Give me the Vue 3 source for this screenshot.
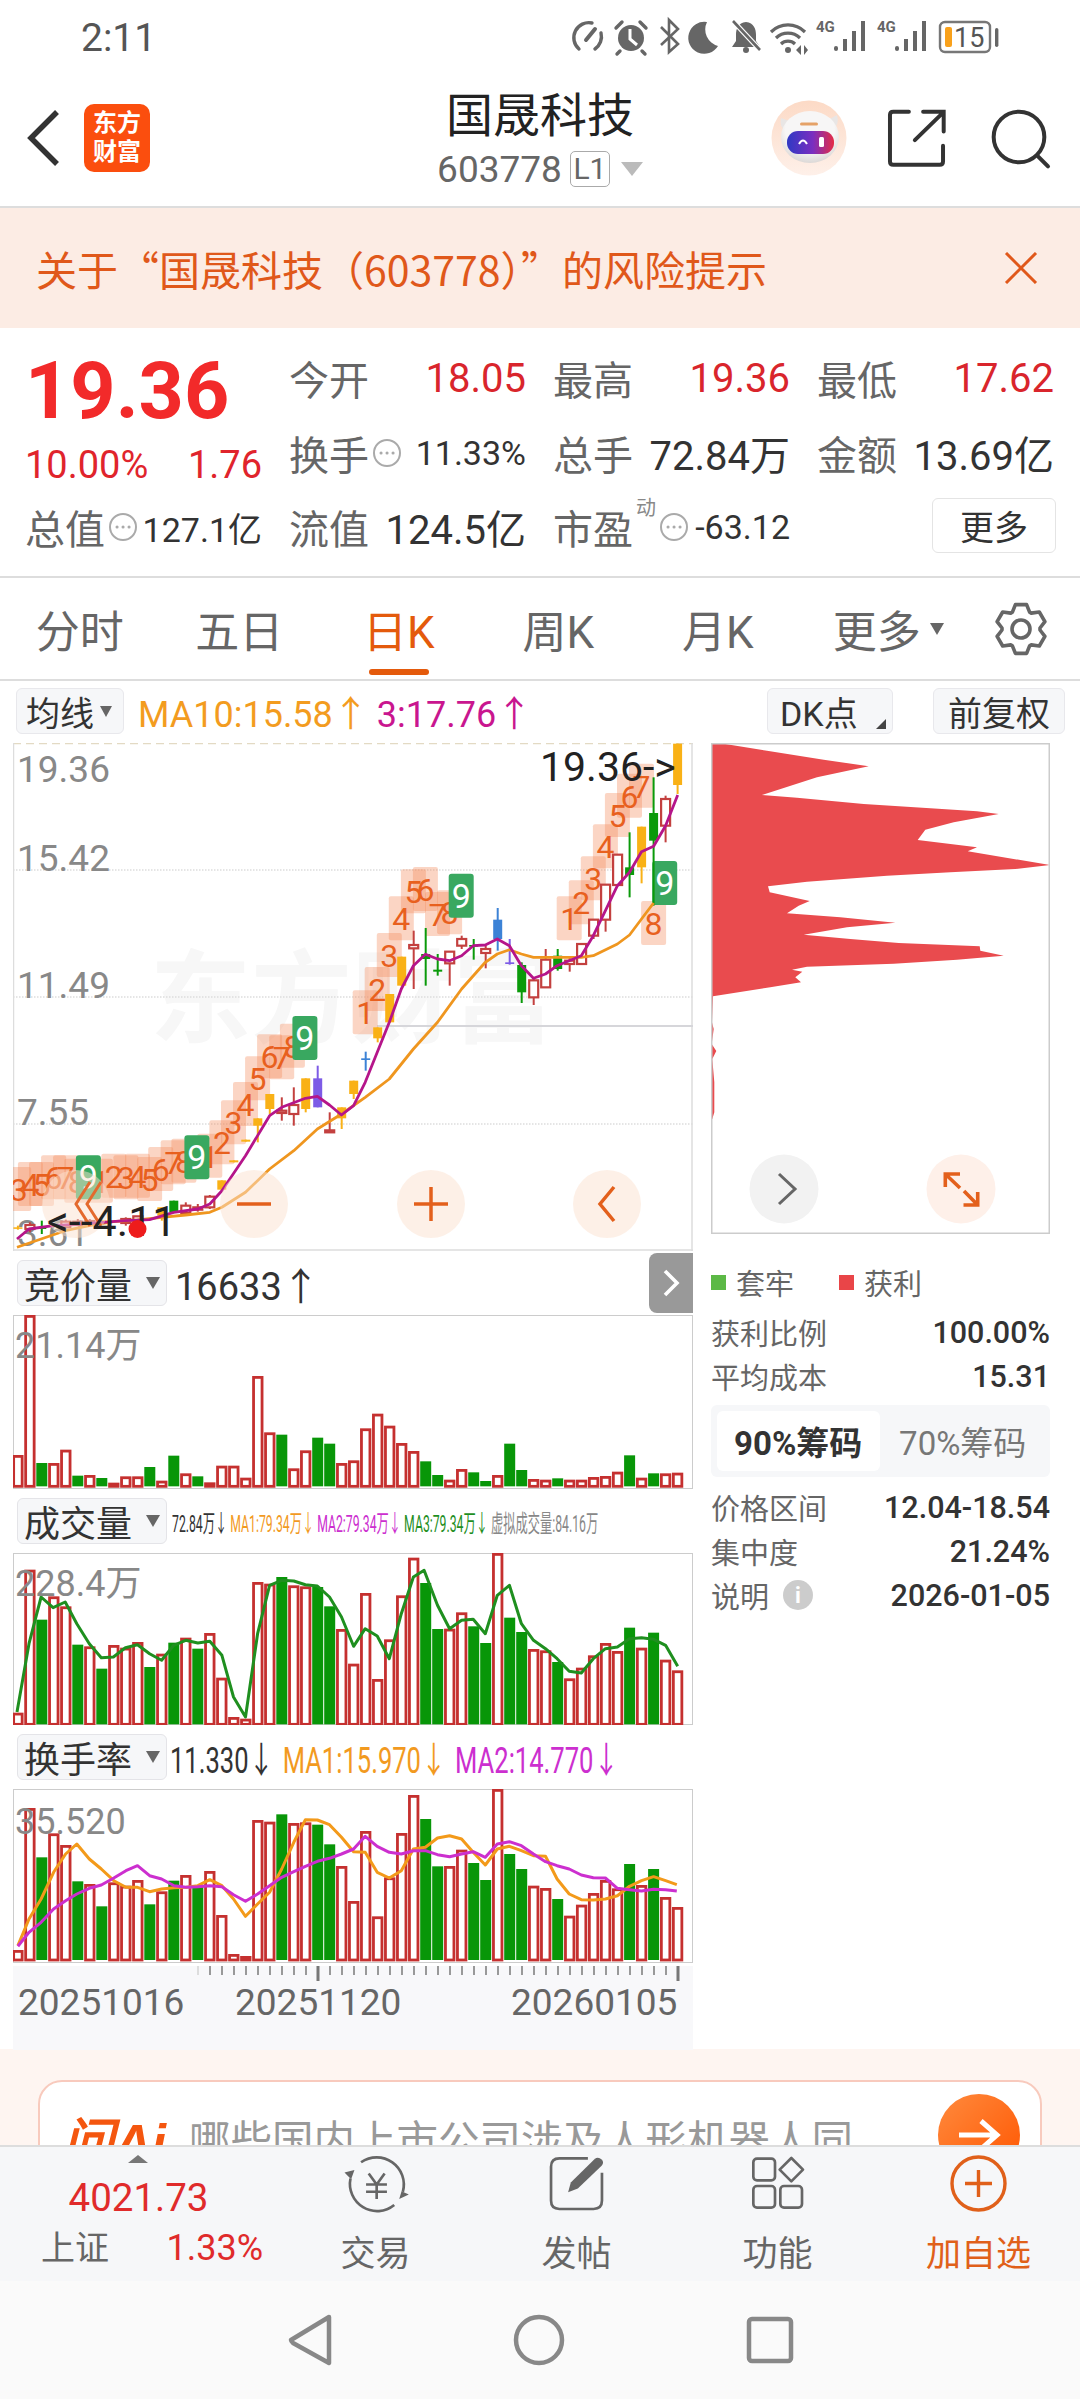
<template>
  <div class="phone" lang="zh-CN">
    <div class="status-bar">
      <span class="status-time">2:11</span>
      <svg class="status-icons" width="450" height="50" viewBox="0 0 450 50">
        <g fill="none" stroke="#666" stroke-width="3.4" stroke-linecap="round">
          <path d="M19 34 A15 15 0 0 1 32 8" />
          <path d="M41 18 A15 15 0 0 1 35 34" />
          <path d="M26 25 L35 14" stroke-width="4" />
        </g>
        <g fill="#666">
          <circle cx="71" cy="23" r="13" />
          <path d="M56 13 L62 7 M86 13 L80 7 M60 36 L57 39 M82 36 L85 39" stroke="#666" stroke-width="3.4" stroke-linecap="round" />
          <path d="M70 14 V24 L77 30" fill="none" stroke="#fff" stroke-width="3" />
        </g>
        <path d="M101 12 L118 29 L109 37 V5 L118 14 L101 30" fill="none" stroke="#666" stroke-width="2.6" />
        <path d="M147 7 A16 16 0 1 0 158 31 A17 17 0 0 1 147 7 Z" fill="#666" />
        <g fill="#666">
          <path d="M186 7 C178 8 176 14 176 20 V26 L172 32 H200 L196 26 V20 C196 14 194 8 186 7 Z" />
          <circle cx="186" cy="35" r="3" />
          <path d="M173 6 L200 35" stroke="#fff" stroke-width="5" />
          <path d="M173 6 L200 35" stroke="#666" stroke-width="2.6" />
        </g>
        <g fill="none" stroke="#666" stroke-width="3.2">
          <path d="M211 17 A24 24 0 0 1 245 17" />
          <path d="M216 23 A17 17 0 0 1 240 23" />
          <path d="M221 29 A10 10 0 0 1 235 29" />
        </g>
        <circle cx="228" cy="35" r="3" fill="#666" />
        <path d="M236 35 L241 30 V40 Z M244 30 L248 35 L244 40 Z" fill="#666" />
        <text x="256" y="17" class="st-4g">4G</text>
        <g fill="#666">
          <rect x="274" y="31" width="4" height="5" rx="2" />
          <rect x="283" y="24" width="4" height="12" />
          <rect x="292" y="16" width="4" height="20" />
          <rect x="301" y="6" width="4" height="30" />
        </g>
        <text x="317" y="17" class="st-4g">4G</text>
        <g fill="#666">
          <rect x="335" y="31" width="4" height="5" rx="2" />
          <rect x="344" y="24" width="4" height="12" />
          <rect x="353" y="16" width="4" height="20" />
          <rect x="362" y="6" width="4" height="30" />
        </g>
        <rect x="380" y="7" width="50" height="30" rx="5" fill="none" stroke="#777" stroke-width="2.4" />
        <rect x="385" y="12" width="7" height="20" rx="2" fill="#f9a11b" />
        <text x="394" y="31.5" class="st-batt">15</text>
        <rect x="435" y="13" width="3.4" height="19" rx="1.7" fill="#666" />
      </svg>
    </div>

    <header class="stock-head">
      <div class="head-left">
        <svg width="36" height="60" viewBox="0 0 36 60">
          <path d="M31 4 L5 30 L31 56" fill="none" stroke="#333" stroke-width="5.5" />
        </svg>
        <div class="logo"><span>东方</span><span>财富</span></div>
      </div>
      <div class="head-title">
        <div class="stock-name">国晟科技</div>
        <div class="stock-code">
          <span>603778</span>
          <span class="l1-tag">L1</span>
          <i class="caret caret-code"></i>
        </div>
      </div>
      <div class="head-right">
        <svg width="76" height="76" viewBox="0 0 76 76">
          <defs>
            <linearGradient id="avatarBg" x1="0" y1="0" x2="0" y2="1">
              <stop offset="0" stop-color="#fcdac6" />
              <stop offset="1" stop-color="#fef0e9" />
            </linearGradient>
            <linearGradient id="visor" x1="0" y1="0" x2="1" y2="0">
              <stop offset="0" stop-color="#2f39c4" />
              <stop offset="0.55" stop-color="#7a2fc0" />
              <stop offset="1" stop-color="#e42c46" />
            </linearGradient>
            <radialGradient id="helmet" cx="0.5" cy="0.35" r="0.7">
              <stop offset="0.6" stop-color="#f7f6f6" />
              <stop offset="1" stop-color="#d6d2d0" />
            </radialGradient>
          </defs>
          <circle cx="38" cy="38" r="37.5" fill="url(#avatarBg)" />
          <path d="M10 18 Q8 27 15 31 L21 22 Z M66 15 Q69 25 61 30 L55 21 Z" fill="#e9e6e5" />
          <ellipse cx="39" cy="37" rx="29" ry="26" fill="url(#helmet)" />
          <rect x="29" y="22.500" width="18" height="3" rx="1.5" fill="#e5a268" />
          <rect x="16" y="31" width="47" height="23" rx="11" fill="url(#visor)" />
          <path d="M28 44 Q32 37 36 44" fill="none" stroke="#fff" stroke-width="2" />
          <rect x="48" y="37" width="5" height="10" rx="1.5" fill="#fff" />
        </svg>
        <svg class="share-icon" width="63" height="63" viewBox="375 38 190 190">
          <path d="M447 52 H400 Q390 52 390 62 V202 Q390 212 400 212 H540 Q550 212 550 202 V155" fill="none" stroke="#333" stroke-width="12" stroke-linecap="round" />
          <path d="M465 138 L550 55 M490 52 H552 V112" fill="none" stroke="#333" stroke-width="12" stroke-linecap="round" />
        </svg>
        <svg class="search-icon" width="65" height="65" viewBox="685 32 195 195">
          <circle cx="778" cy="125" r="76" fill="none" stroke="#333" stroke-width="12" />
          <path d="M835 183 L865 213" stroke="#333" stroke-width="12" stroke-linecap="round" />
        </svg>
      </div>
    </header>

    <div class="risk-banner">
      <span>关于“国晟科技（603778）”的风险提示</span>
      <svg width="34" height="32" viewBox="0 0 34 32">
        <path d="M2 1 L32 31 M32 1 L2 31" stroke="#e0581a" stroke-width="3" />
      </svg>
    </div>

    <section class="quote">
      <div class="price-cell">
        <div class="price">19.36</div>
        <div class="price-change"><span>10.00%</span><span>1.76</span></div>
      </div>
      <div class="q-cell"><span class="q-label">今开</span><span class="q-val up">18.05</span></div>
      <div class="q-cell"><span class="q-label">最高</span><span class="q-val up">19.36</span></div>
      <div class="q-cell"><span class="q-label">最低</span><span class="q-val up">17.62</span></div>
      <div class="q-cell">
        <span class="q-label tip">换手<svg class="dots" width="30" height="30" viewBox="0 0 30 30"><circle cx="15" cy="15" r="13" /><path d="M9 15h.1M15 15h.1M21 15h.1" /></svg></span>
        <span class="q-val small">11.33%</span>
      </div>
      <div class="q-cell"><span class="q-label">总手</span><span class="q-val">72.84万</span></div>
      <div class="q-cell"><span class="q-label">金额</span><span class="q-val">13.69亿</span></div>
      <div class="q-cell">
        <span class="q-label tip">总值<svg class="dots" width="30" height="30" viewBox="0 0 30 30"><circle cx="15" cy="15" r="13" /><path d="M9 15h.1M15 15h.1M21 15h.1" /></svg></span>
        <span class="q-val small">127.1亿</span>
      </div>
      <div class="q-cell"><span class="q-label">流值</span><span class="q-val">124.5亿</span></div>
      <div class="q-cell">
        <span class="q-label tip">市盈<sup class="dyn">动</sup><svg class="dots" width="30" height="30" viewBox="0 0 30 30"><circle cx="15" cy="15" r="13" /><path d="M9 15h.1M15 15h.1M21 15h.1" /></svg></span>
        <span class="q-val small">-63.12</span>
      </div>
      <div class="q-cell q-more"><button class="more-btn">更多</button></div>
    </section>

    <nav class="period-tabs">
      <div v-for="tab in tabs" :key="tab" class="period-tab" :class="{ active: tab === '日K' }">
        <span>{{ tab }}</span>
      </div>
      <div class="period-tab more-tab"><span>更多</span><i class="caret caret-tab"></i></div>
      <svg class="gear" width="54" height="54" viewBox="0 0 54 54">
        <path :d="gearPath" fill="none" stroke="#666" stroke-width="3.6" stroke-linejoin="round" />
        <circle cx="27" cy="27" r="9" fill="none" stroke="#666" stroke-width="3.6" />
      </svg>
    </nav>

    <div class="chart-toolbar">
      <div class="tool-btn ma-btn">均线<i class="caret caret-mini"></i></div>
      <span class="ma-a">MA10:15.58↑</span>
      <span class="ma-b">3:17.76↑</span>
      <div class="tool-btn dk-btn">DK点<i class="corner"></i></div>
      <div class="tool-btn fq-btn">前复权</div>
    </div>

    <div class="chart-main">
      <div class="left-col">
        <svg class="kline" width="680" height="508" viewBox="0 0 680 508">
          <text class="watermark" x="137" y="292">东方财富</text>
          <path d="M0 0.5 H680" stroke="#e3dac4" stroke-width="1.5" stroke-dasharray="8 5" />
          <path d="M0.5 0 V508 M679 0 V508 M0 507 H680" stroke="#ddd" stroke-width="1.5" fill="none" />
          <path d="M0 127 H680 M0 254 H680 M0 381 H680" stroke="#ddd" stroke-width="1.5" stroke-dasharray="1.5 1.5" />
          <path d="M364 283 H680" stroke="#d6d6da" stroke-width="2" />

          <text class="y-label" x="4" y="39">19.36</text>
          <text class="y-label" x="4" y="128">15.42</text>
          <text class="y-label" x="4" y="255">11.49</text>
          <text class="y-label" x="4" y="382">7.55</text>
          <text class="y-label" x="4" y="503">3.61</text>

          <rect v-for="(c, n) in turnCells" :key="'c' + n" :x="c.x - 12.5" :y="c.y - 22" width="25" height="44" fill="#f58a5c" fill-opacity="0.36" rx="2" />
          <text v-for="(c, n) in turnCells" :key="'t' + n" class="turn-num" :x="c.x" :y="c.y + 12">{{ c.n }}</text>
          <g v-for="(b, n) in nineBadges" :key="'b' + n">
            <rect :x="b.x - 12.5" :y="b.y - 22" width="25" height="44" rx="3" fill="#39a860" />
            <text class="nine" :x="b.x" :y="b.y + 12">9</text>
          </g>

          <g v-for="(c, n) in candles" :key="'k' + n">
            <path :d="`M${c.x} ${c.wt} V${c.wb}`" :stroke="c.color" stroke-width="2" />
            <rect :x="c.x - 4.5" :y="c.bt" width="9" :height="c.bh" :fill="c.hollow ? '#fff' : c.color" :stroke="c.hollow ? c.color : 'none'" :stroke-width="c.hollow ? 2.2 : 0" />
          </g>
          <polyline :points="kOrange" fill="none" stroke="#ef961f" stroke-width="2.8" stroke-linejoin="round" />
          <polyline :points="kMagenta" fill="none" stroke="#b5158a" stroke-width="2.8" stroke-linejoin="round" />

          <text class="k-note big" x="527" y="38">19.36-&gt;</text>
          <circle cx="63" cy="461" r="34" fill="#fbe1d0" fill-opacity="0.5" />
          <path d="M77 439 L63 461 L77 483 M88 439 L74 461 L88 483" fill="none" stroke="#e46a2e" stroke-width="3" />
          <circle cx="241" cy="461" r="34" fill="#fbe1d0" fill-opacity="0.5" />
          <path d="M224 461 H258" stroke="#e3601c" stroke-width="3.5" />
          <circle cx="418" cy="461" r="34" fill="#fbe1d0" fill-opacity="0.5" />
          <path d="M401 461 H435 M418 444 V478" stroke="#e3601c" stroke-width="3.5" />
          <circle cx="594" cy="461" r="34" fill="#fbe1d0" fill-opacity="0.5" />
          <path d="M601 444 L587 461 L601 478" fill="none" stroke="#e3601c" stroke-width="3.5" />

          <text class="k-note low" x="34" y="493">&lt;--4.11</text>
          <circle cx="124.500" cy="486" r="9" fill="#ee1c1c" />
        </svg>

        <div class="ind-row">
          <div class="ind-tab">竞价量<i class="caret caret-ind"></i></div>
          <span class="ind-val">16633↑</span>
          <div class="collapse-tab">
            <svg width="18" height="28" viewBox="0 0 18 28"><path d="M3 2 L15 14 L3 26" fill="none" stroke="#fff" stroke-width="3.6" /></svg>
          </div>
        </div>
        <svg class="ind-chart" width="680" height="174" viewBox="0 0 680 174">
          <rect x="0.5" y="0.5" width="679" height="173" fill="none" stroke="#ccc" />
          <rect v-for="(b, n) in auctionBars" :key="n" v-bind="barAttrs(b)" />
          <text class="y-label small" x="2" y="43">21.14万</text>
        </svg>

        <div class="ind-row">
          <div class="ind-tab">成交量<i class="caret caret-ind"></i></div>
          <div class="vol-legend">
            <span class="dark">72.84万↓</span>
            <span class="orange">MA1:79.34万↓</span>
            <span class="purple">MA2:79.34万↓</span>
            <span class="green">MA3:79.34万↓</span>
            <span class="grey">虚拟成交量:84.16万</span>
          </div>
        </div>
        <svg class="ind-chart" width="680" height="172" viewBox="0 0 680 172">
          <rect x="0.5" y="0.5" width="679" height="171" fill="none" stroke="#ccc" />
          <rect v-for="(b, n) in volumeBars" :key="n" v-bind="barAttrs(b)" />
          <polyline :points="volLine" fill="none" stroke="#1f8f1f" stroke-width="3" stroke-linejoin="round" />
          <text class="y-label small" x="2" y="43">228.4万</text>
        </svg>

        <div class="ind-row">
          <div class="ind-tab">换手率<i class="caret caret-ind"></i></div>
          <div class="turn-legend">
            <span class="dark">11.330↓</span>
            <span class="orange">MA1:15.970↓</span>
            <span class="purple">MA2:14.770↓</span>
          </div>
        </div>
        <svg class="ind-chart" width="680" height="174" viewBox="0 0 680 174">
          <rect x="0.5" y="0.5" width="679" height="173" fill="none" stroke="#ccc" />
          <rect v-for="(b, n) in turnoverBars" :key="n" v-bind="barAttrs(b)" />
          <polyline :points="turnOrange" fill="none" stroke="#f39a1a" stroke-width="3" stroke-linejoin="round" />
          <polyline :points="turnMagenta" fill="none" stroke="#cc2fcf" stroke-width="3" stroke-linejoin="round" />
          <text class="y-label small" x="2" y="45">35.520</text>
        </svg>

        <svg class="xaxis" width="680" height="84" viewBox="0 0 680 84">
          <path v-for="t in xTicks" :key="t.x" :d="`M${t.x} 0 V${t.h}`" :stroke="t.color" :stroke-width="t.w" />
          <text class="x-label" x="5" y="49">20251016</text>
          <text class="x-label" x="222" y="49">20251120</text>
          <text class="x-label" x="498" y="49">20260105</text>
        </svg>
      </div>

      <div class="right-col">
        <svg class="chips" width="339" height="491" viewBox="0 0 339 491">
          <polygon :points="chipPoints" fill="#e94b4e" />
          <rect x="0.75" y="0.75" width="337.5" height="489.5" fill="none" stroke="#ccc" stroke-width="1.5" />
          <circle cx="73" cy="446" r="34.500" fill="#f2f2f2" />
          <path d="M68 431 L84 446 L68 461" fill="none" stroke="#666" stroke-width="3" />
          <circle cx="250" cy="446" r="34.500" fill="#fef0e9" />
          <path d="M234.300 444 V431 H249 M234.300 431 L249 445 M266.700 449 V462 H252.500 M266.700 462 L253 448" fill="none" stroke="#e3601c" stroke-width="3.6" />
        </svg>
        <div class="chip-legend">
          <i class="sq sq-green"></i><span>套牢</span>
          <i class="sq sq-red"></i><span>获利</span>
        </div>
        <div class="chip-row first"><span>获利比例</span><b>100.00%</b></div>
        <div class="chip-row"><span>平均成本</span><b>15.31</b></div>
        <div class="chip-seg">
          <div class="seg-item active">90%筹码</div>
          <div class="seg-item">70%筹码</div>
        </div>
        <div class="chip-row after-seg"><span>价格区间</span><b>12.04-18.54</b></div>
        <div class="chip-row"><span>集中度</span><b>21.24%</b></div>
        <div class="chip-row"><span class="with-info">说明<i class="info">i</i></span><b>2026-01-05</b></div>
      </div>
    </div>

    <div class="ai-strip">
      <div class="ai-card">
        <span class="ai-logo">问Ai</span>
        <span class="ai-text">哪些国内上市公司涉及人形机器人同</span>
        <div class="ai-go">
          <svg width="44" height="36" viewBox="0 0 44 36"><path d="M2 18 H38 M24 4 L40 18 L24 32" fill="none" stroke="#fff" stroke-width="5" /></svg>
        </div>
      </div>
    </div>

    <footer class="bottom-bar">
      <div class="index-cell">
        <i class="caret-up"></i>
        <div class="index-value">4021.73</div>
        <div class="index-row"><span>上证</span><span class="up">1.33%</span></div>
      </div>
      <div class="bar-cell">
        <svg width="70" height="63" viewBox="0 10 210 190">
          <g fill="none" stroke="#666" stroke-width="8">
            <path d="M60 41 A82 82 0 0 1 186 130" />
            <path d="M160 170 A82 82 0 0 1 28 90" />
            <path d="M83 75 L107 108 L131 75 M75 108 H138 M75 130 H138 M107 108 V152" />
          </g>
          <path d="M175 152 L204 138 L182 128 Z M10 72 L40 64 L30 92 Z" fill="#666" />
        </svg>
        <span>交易</span>
      </div>
      <div class="bar-cell">
        <svg width="62" height="63" viewBox="620 13 185 188">
          <path d="M745 32 H660 Q635 32 635 57 V158 Q635 183 660 183 H762 Q787 183 787 158 V75" fill="none" stroke="#666" stroke-width="8" />
          <path d="M686 133 L694 104 L766 33 Q776 26 787 36 Q794 45 786 54 L715 122 Z" fill="#666" />
        </svg>
        <span>发帖</span>
      </div>
      <div class="bar-cell">
        <svg width="60" height="63" viewBox="1225 15 180 189">
          <g fill="none" stroke="#666" stroke-width="8">
            <rect x="1241" y="35" width="65" height="65" rx="11" />
            <rect x="1241" y="117" width="65" height="65" rx="11" />
            <rect x="1322" y="117" width="65" height="65" rx="11" />
            <path d="M1355 33 L1390 68 L1355 103 L1320 68 Z" stroke-linejoin="round" />
          </g>
        </svg>
        <span>功能</span>
      </div>
      <div class="bar-cell accent">
        <svg width="63" height="63" viewBox="0 0 63 63">
          <circle cx="31.500" cy="31.500" r="26.500" fill="none" stroke="#e0601a" stroke-width="3.4" />
          <path d="M18 31.500 H45 M31.500 18 V45" stroke="#e0601a" stroke-width="3.4" />
        </svg>
        <span>加自选</span>
      </div>
    </footer>

    <div class="nav-bar">
      <svg width="44" height="52" viewBox="0 0 44 52"><path d="M41 3 L3 26 Q3 27 5 29 L41 49 Z" fill="none" stroke="#888" stroke-width="4.500" stroke-linejoin="round" /></svg>
      <svg width="52" height="52" viewBox="0 0 52 52"><circle cx="26" cy="26" r="23" fill="none" stroke="#888" stroke-width="4.500" /></svg>
      <svg width="48" height="48" viewBox="0 0 48 48"><rect x="3" y="3" width="42" height="42" rx="3" fill="none" stroke="#888" stroke-width="4.500" /></svg>
    </div>
  </div>
</template>

<script setup>
const tabs = ['分时', '五日', '日K', '周K', '月K']

// chart values were read off the 700px wide crops, so convert those units to svg px
const px = (zx) => +(zx / 2.24 - 13).toFixed(1)
const xOf = (i) => px(40 + 26.87 * i)
const toPoints = (pts, top) =>
  pts.map(([x, y]) => `${px(x)},${((y - top) / 3).toFixed(1)}`).join(' ')

const greenDays = [2, 5, 7, 11, 13, 15, 22, 25, 26, 34, 35, 38, 39, 41, 42, 45, 51, 53]

const buildBars = (tops, ztop, zbase) =>
  tops.map((t, i) => ({
    x: xOf(i),
    y: (t - ztop) / 3,
    h: (zbase - t) / 3,
    down: greenDays.includes(i)
  }))

const barAttrs = (b) =>
  b.down
    ? { x: b.x - 5.5, y: b.y, width: 11, height: b.h, fill: '#089608' }
    : { x: b.x - 4.25, y: b.y + 1.4, width: 8.5, height: b.h - 1.4, fill: '#fff', stroke: '#c5302f', 'stroke-width': 2.8 }

const auctionBars = buildBars([
  648, 228, 672, 672, 632, 710, 708, 717, 731, 712, 712, 684, 725, 650, 703, 712, 730, 680, 680, 716,
  411, 580, 587, 688, 634, 596, 614, 672, 664, 568, 524, 560, 612, 636, 667, 708, 722, 690, 700, 726,
  708, 614, 693, 720, 722, 718, 722, 722, 714, 711, 698, 649, 716, 703, 703, 701
], 228, 742)

const volumeBars = buildBars([
  1417, 988, 1138, 1068, 1098, 1213, 1218, 1285, 1214, 1222, 1205, 1280, 1240, 1207, 1192, 1225, 1178, 1312, 1430, 1435,
  1025, 1030, 1010, 1035, 1038, 1040, 1098, 1166, 1270, 1058, 1316, 1197, 1065, 952, 1028, 1166, 1165, 1116, 1158, 1208,
  938, 1132, 1175, 1226, 1230, 1265, 1314, 1282, 1245, 1208, 1232, 1162, 1222, 1177, 1258, 1290
], 938, 1452)

const turnoverBars = buildBars([
  663, 237, 385, 313, 348, 457, 465, 532, 460, 470, 453, 526, 487, 455, 438, 470, 426, 558, 675, 681,
  273, 278, 256, 282, 280, 287, 346, 411, 516, 306, 562, 445, 312, 198, 270, 412, 411, 362, 402, 453,
  180, 375, 420, 470, 477, 510, 560, 527, 492, 453, 478, 405, 468, 420, 504, 534
], 180, 693)

const volLine = toPoints([
  [38, 1415], [65, 1210], [92, 1070], [119, 1102], [146, 1085], [172, 1150], [200, 1210], [227, 1252], [254, 1250], [281, 1222],
  [308, 1213], [335, 1240], [362, 1260], [389, 1215], [416, 1200], [443, 1208], [470, 1203], [497, 1245], [523, 1370], [550, 1430],
  [577, 1180], [604, 1035], [631, 1020], [658, 1022], [684, 1033], [711, 1037], [738, 1070], [765, 1130], [792, 1218], [818, 1165],
  [845, 1187], [872, 1255], [899, 1120], [926, 1010], [950, 990], [980, 1095], [1007, 1165], [1034, 1140], [1060, 1137], [1087, 1180],
  [1114, 1065], [1141, 1035], [1168, 1150], [1195, 1200], [1222, 1225], [1248, 1255], [1275, 1293], [1302, 1298], [1329, 1255], [1356, 1225],
  [1383, 1220], [1410, 1195], [1437, 1192], [1464, 1197], [1491, 1215], [1518, 1278]
], 938)

const turnOrange = toPoints([
  [40, 650], [65, 570], [92, 510], [120, 430], [147, 375], [172, 345], [200, 390], [227, 420], [255, 455], [282, 475],
  [308, 475], [335, 488], [362, 480], [390, 476], [417, 475], [443, 470], [470, 452], [497, 470], [523, 510], [550, 562],
  [577, 525], [604, 490], [631, 420], [658, 340], [684, 272], [711, 273], [738, 287], [765, 325], [792, 368], [818, 370],
  [845, 430], [872, 447], [899, 425], [926, 360], [953, 355], [980, 327], [1007, 320], [1034, 330], [1060, 370], [1087, 408],
  [1114, 360], [1141, 352], [1168, 365], [1195, 380], [1222, 382], [1248, 450], [1275, 495], [1302, 512], [1329, 513], [1356, 510],
  [1383, 500], [1410, 472], [1437, 455], [1464, 443], [1491, 455], [1516, 467]
], 180)

const turnMagenta = toPoints([
  [40, 652], [65, 610], [92, 580], [120, 540], [147, 515], [172, 495], [200, 478], [227, 468], [255, 447], [282, 425],
  [308, 410], [335, 440], [362, 450], [390, 470], [417, 475], [443, 473], [470, 470], [497, 473], [523, 497], [550, 517],
  [577, 495], [604, 470], [631, 445], [658, 428], [684, 412], [711, 397], [738, 388], [765, 375], [792, 360], [818, 322],
  [845, 352], [872, 370], [899, 375], [926, 365], [953, 365], [980, 377], [1007, 383], [1034, 375], [1060, 368], [1087, 385],
  [1114, 345], [1141, 338], [1168, 350], [1195, 375], [1222, 398], [1248, 410], [1275, 420], [1302, 438], [1329, 446], [1356, 447],
  [1383, 478], [1410, 482], [1437, 486], [1464, 481], [1491, 482], [1516, 486]
], 180)

const kOrange = toPoints([
  [38, 1555], [92, 1530], [146, 1505], [200, 1490], [254, 1478], [308, 1473], [362, 1465], [416, 1458], [470, 1450], [497, 1435],
  [550, 1390], [604, 1320], [658, 1265], [711, 1200], [765, 1155], [818, 1105], [872, 1050], [926, 960], [980, 880], [1034, 780],
  [1087, 700], [1114, 675], [1141, 662], [1168, 675], [1195, 685], [1248, 685], [1302, 685], [1329, 680], [1383, 645], [1410, 618],
  [1437, 570], [1464, 522]
], 42)

const kMagenta = toPoints([
  [38, 1530], [65, 1500], [119, 1490], [200, 1483], [281, 1475], [335, 1472], [389, 1450], [443, 1440], [470, 1425], [497, 1385],
  [550, 1280], [604, 1160], [631, 1135], [684, 1108], [711, 1102], [738, 1128], [765, 1158], [792, 1130], [818, 1060], [872, 880],
  [899, 780], [926, 710], [953, 676], [980, 690], [1007, 695], [1034, 680], [1060, 650], [1087, 648], [1114, 630], [1141, 650],
  [1168, 710], [1195, 748], [1222, 735], [1248, 710], [1275, 695], [1302, 680], [1329, 620], [1356, 545], [1383, 470], [1410, 430],
  [1437, 368], [1464, 352], [1491, 290], [1518, 198]
], 42)

const candleColors = { r: '#c3403f', o: '#f9b116', g: '#0a9a0a', b: '#3c82d6', p: '#7d5be6' }

// [day, wick top, wick bottom, body top, body bottom, kind]
const candles = [
  [0, 1490, 1502, 1495, 1499, 'o'], [1, 1480, 1510, 1488, 1500, 'r'], [2, 1475, 1515, 1495, 1500, 'g'],
  [4, 1472, 1498, 1478, 1495, 'r'], [5, 1470, 1490, 1478, 1488, 'r'], [6, 1470, 1490, 1476, 1486, 'r'],
  [7, 1472, 1488, 1474, 1480, 'o'], [9, 1465, 1490, 1470, 1482, 'r'], [10, 1462, 1500, 1462, 1482, 'r'],
  [12, 1435, 1475, 1435, 1460, 'o'], [13, 1415, 1452, 1415, 1450, 'g'], [14, 1420, 1460, 1430, 1452, 'r'],
  [15, 1425, 1448, 1435, 1442, 'r'], [16, 1398, 1440, 1403, 1435, 'r'], [17, 1354, 1385, 1354, 1382, 'o'],
  [18, 1294, 1300, 1294, 1300, 'o'], [19, 1232, 1238, 1232, 1238, 'o'], [20, 1168, 1240, 1168, 1190, 'o'],
  [21, 1095, 1155, 1095, 1140, 'o'], [22, 1105, 1175, 1145, 1152, 'r'], [23, 1075, 1190, 1128, 1155, 'r'],
  [24, 1048, 1150, 1048, 1140, 'o'], [25, 1010, 1135, 1048, 1135, 'p'], [26, 1150, 1212, 1204, 1210, 'r'],
  [27, 1135, 1200, 1135, 1168, 'o'], [28, 1055, 1110, 1055, 1095, 'o'], [29, 968, 1025, 988, 993, 'b'],
  [30, 895, 940, 895, 928, 'o'], [31, 795, 882, 795, 880, 'o'], [32, 683, 772, 683, 770, 'o'],
  [33, 605, 780, 648, 658, 'r'], [34, 597, 770, 675, 690, 'g'], [35, 675, 740, 722, 728, 'g'],
  [36, 668, 770, 668, 703, 'r'], [37, 620, 660, 630, 650, 'r'], [38, 630, 692, 648, 653, 'g'],
  [39, 650, 718, 660, 672, 'r'], [40, 537, 665, 572, 630, 'b'], [41, 630, 707, 700, 705, 'p'],
  [42, 700, 822, 708, 790, 'g'], [43, 745, 828, 754, 805, 'r'], [44, 660, 775, 692, 775, 'r'],
  [45, 660, 725, 680, 720, 'g'], [46, 685, 728, 695, 705, 'r'], [47, 645, 705, 645, 705, 'r'],
  [48, 570, 630, 572, 620, 'r'], [49, 467, 608, 467, 572, 'r'], [50, 377, 470, 377, 468, 'r'],
  [51, 310, 505, 415, 438, 'g'], [52, 293, 463, 293, 415, 'o'], [53, 145, 530, 252, 335, 'g'],
  [54, 200, 340, 210, 290, 'r'], [55, 44, 195, 44, 168, 'o']
].map(([i, wt, wb, bt, bb, kind]) => ({
  x: xOf(i),
  wt: (wt - 42) / 3,
  wb: (wb - 42) / 3,
  bt: (bt - 42) / 3,
  bh: Math.max((bb - bt) / 3, 1.5),
  color: candleColors[kind],
  hollow: kind === 'r'
}))

const turnCells = [
  ['3', 42, 1380], ['4', 68, 1365], ['5', 93, 1365], ['6', 120, 1345], ['7', 147, 1345], ['8', 172, 1355],
  ['1', 225, 1355], ['2', 255, 1340], ['3', 282, 1345], ['4', 308, 1340], ['5', 335, 1350], ['6', 360, 1320],
  ['7', 388, 1300], ['8', 412, 1295], ['1', 470, 1280], ['2', 497, 1240], ['3', 523, 1180], ['4', 550, 1125],
  ['5', 577, 1048], ['6', 604, 982], ['7', 631, 985], ['8', 655, 950],
  ['1', 818, 850], ['2', 845, 780], ['3', 872, 678], ['4', 899, 568], ['5', 926, 487], ['6', 953, 480],
  ['7', 980, 555], ['8', 1007, 550],
  ['1', 1275, 568], ['2', 1302, 520], ['3', 1329, 448], ['4', 1356, 352], ['5', 1383, 258], ['6', 1410, 200],
  ['7', 1437, 170], ['8', 1464, 582]
].map(([n, x, y]) => ({ n, x: px(x), y: (y - 42) / 3 }))

const nineBadges = [[198, 1345], [441, 1285], [683, 927], [1033, 500], [1489, 462]].map(([x, y]) => ({
  x: px(x),
  y: (y - 42) / 3
}))

// chip distribution outline, from the 3x crop of the right panel
const chipPoints = [
  [62, 42], [100, 44], [230, 65], [400, 92], [535, 112], [380, 145], [215, 198], [320, 206], [520, 225], [720, 238],
  [860, 247], [925, 255], [790, 280], [705, 302], [682, 333], [860, 355], [832, 367], [1080, 408], [975, 420], [780, 430],
  [590, 440], [350, 458], [233, 472], [238, 490], [358, 516], [325, 530], [290, 553], [450, 565], [615, 581], [470, 595],
  [340, 617], [480, 630], [625, 642], [868, 652], [870, 665], [940, 680], [800, 692], [610, 704], [350, 713], [305, 722],
  [336, 728], [315, 745], [332, 760], [240, 775], [68, 802], [65, 880], [70, 900], [64, 945], [78, 966], [66, 990],
  [72, 1060], [72, 1150], [66, 1170], [62, 1170]
].map(([x, y]) => `${((x - 62) / 3).toFixed(1)},${((y - 42) / 3).toFixed(1)}`).join(' ')

const xTicks = []
for (let i = 0; i <= 40; i++) {
  const x = +(665 - 12 * i).toFixed(1)
  const major = i === 0 || i === 30
  xTicks.push({
    x,
    h: major ? 15 : 9,
    w: major ? 3 : 2,
    color: x < 190 ? '#ddd' : major ? '#777' : '#999'
  })
}

const gearPoints = []
for (let k = 0; k < 6; k++) {
  const a = -90 + 60 * k
  ;[[-27, 19], [-13, 25], [13, 25], [27, 19]].forEach(([d, r]) => {
    const rad = ((a + d) * Math.PI) / 180
    gearPoints.push(`${(27 + r * Math.cos(rad)).toFixed(1)} ${(27 + r * Math.sin(rad)).toFixed(1)}`)
  })
}
const gearPath = 'M' + gearPoints.join(' L') + ' Z'
</script>

<style scoped>
.phone {
  position: relative;
  width: 1080px;
  height: 2400px;
  overflow: hidden;
  background: #fff;
  font-family: Roboto, "Noto Sans CJK SC", sans-serif;
  color: #333;
}

.status-bar {
  display: flex;
  justify-content: space-between;
  height: 72px;
  padding-left: 81px;
  padding-right: 70px;
  box-sizing: border-box;
}

.status-time {
  font-size: 39px;
  line-height: 76px;
  color: #555;
}

.status-icons {
  margin-top: 15px;
}

.st-4g {
  font-family: Roboto, sans-serif;
  font-size: 15px;
  font-weight: 700;
  fill: #666;
}

.st-batt {
  font-family: Roboto, sans-serif;
  font-size: 27px;
  fill: #555;
}

.stock-head {
  display: grid;
  grid-template-columns: 1fr auto 1fr;
  height: 134px;
  border-bottom: 2px solid #ddd;
  box-sizing: content-box;
}

.head-left {
  display: flex;
  align-items: center;
  gap: 22px;
  padding-left: 26px;
  margin-top: -2px;
}

.logo {
  display: flex;
  flex-direction: column;
  align-items: center;
  justify-content: center;
  width: 66px;
  height: 68px;
  border-radius: 10px;
  background: #fb4e0e;
  color: #fff;
  font-size: 24px;
  font-weight: 700;
  line-height: 29px;
}

.head-title {
  display: flex;
  flex-direction: column;
  align-items: center;
}

.stock-name {
  margin-top: 18px;
  font-size: 47px;
  line-height: 52px;
  color: #222;
}

.stock-code {
  display: flex;
  align-items: center;
  height: 44px;
  margin-top: 5px;
  font-size: 37px;
  color: #666;
}

.l1-tag {
  width: 40px;
  height: 36px;
  margin-left: 8px;
  border: 1.5px solid #aaa;
  border-radius: 5px;
  box-sizing: border-box;
  font-size: 30px;
  line-height: 33px;
  text-align: center;
}

.caret {
  display: inline-block;
  width: 0;
  height: 0;
  border-style: solid;
  border-color: #666 transparent transparent;
}

.caret-code {
  margin-left: 11px;
  border-width: 14px 11px 0;
  border-top-color: #bbb;
}

.head-right {
  display: flex;
  align-items: center;
  justify-content: flex-end;
  padding-right: 27px;
  margin-top: -2px;
}

.share-icon {
  margin-left: 38px;
}

.search-icon {
  margin-left: 40px;
}

.risk-banner {
  display: flex;
  align-items: center;
  justify-content: space-between;
  height: 120px;
  padding: 0 42px 0 36px;
  background: #fcece4;
  color: #e0581a;
  font-family: "Noto Sans CJK SC", Roboto, sans-serif;
  font-size: 41px;
}

.quote {
  display: grid;
  grid-template-columns: repeat(4, 237px);
  grid-auto-rows: 74.5px;
  column-gap: 27px;
  height: 250px;
  padding: 13px 0 0 25px;
  box-sizing: border-box;
  border-bottom: 2px solid #ddd;
}

.price-cell {
  grid-column: 1;
  grid-row: 1 / span 2;
}

.price {
  margin-top: 6px;
  font-size: 79px;
  font-weight: 700;
  line-height: 88px;
  color: #f22a2a;
}

.price-change {
  display: flex;
  justify-content: space-between;
  font-size: 38px;
  line-height: 48px;
  color: #e0242c;
  margin-top: 6px;
}

.q-cell {
  display: flex;
  align-items: center;
  justify-content: space-between;
  white-space: nowrap;
}

.q-label {
  display: flex;
  align-items: center;
  font-size: 40px;
  color: #666;
}

.q-val {
  font-size: 40px;
  color: #333;
}

.q-val.up,
.up {
  color: #d9252c;
}

.q-val.small {
  font-size: 34px;
}

.dots {
  flex-shrink: 0;
  margin-left: 3px;
  fill: none;
  stroke: #aaa;
  stroke-width: 2;
}

.dots path {
  stroke-linecap: round;
  stroke-width: 3;
}

.dyn {
  align-self: flex-start;
  margin: -2px 0 0 3px;
  font-size: 20px;
  line-height: 24px;
  color: #888;
}

.q-more {
  justify-content: flex-end;
  padding-bottom: 4px;
}

.more-btn {
  width: 124px;
  height: 55px;
  margin-right: -2px;
  border: 1px solid #e4e4e4;
  border-radius: 6px;
  background: #fff;
  font-family: inherit;
  font-size: 34px;
  color: #333;
}

.period-tabs {
  display: flex;
  align-items: center;
  height: 101px;
  border-bottom: 2px solid #ddd;
  font-size: 44px;
  color: #666;
}

.period-tab {
  position: relative;
  width: 159.5px;
  text-align: center;
}

.period-tab.active {
  color: #e45a0c;
}

.period-tab.active span::after {
  content: "";
  position: absolute;
  left: 50px;
  bottom: -14px;
  width: 60px;
  height: 6px;
  border-radius: 3px;
  background: #e45a0c;
}

.more-tab {
  display: flex;
  align-items: center;
  justify-content: center;
  padding-left: 22px;
  box-sizing: border-box;
}

.caret-tab {
  margin-left: 9px;
  border-width: 12px 7px 0;
}

.gear {
  margin-left: 37px;
}

.chart-toolbar {
  display: flex;
  align-items: center;
  height: 62px;
  padding: 0 15px 2px 16px;
  box-sizing: border-box;
  font-size: 36px;
  white-space: nowrap;
}

.tool-btn {
  position: relative;
  display: flex;
  align-items: center;
  height: 46px;
  border: 1px solid #e8e8ec;
  border-radius: 6px;
  box-sizing: border-box;
  background: #f6f7f9;
  font-size: 34px;
  color: #333;
}

.ma-btn {
  width: 108px;
  padding-left: 9px;
}

.caret-mini {
  margin-left: 6px;
  border-width: 11px 6px 0;
}

.ma-a {
  margin-left: 14px;
  color: #f39c1f;
}

.ma-b {
  margin-left: 8px;
  color: #c9168f;
}

.dk-btn {
  width: 126px;
  margin-left: auto;
  padding-left: 12px;
}

.corner {
  position: absolute;
  right: 6px;
  bottom: 4px;
  width: 0;
  height: 0;
  border-style: solid;
  border-width: 0 0 10px 10px;
  border-color: transparent transparent #444;
}

.fq-btn {
  justify-content: center;
  width: 132px;
  margin-left: 40px;
}

.chart-main {
  display: flex;
  height: 1306px;
}

.left-col {
  width: 680px;
  margin-left: 13px;
}

.left-col svg {
  display: block;
}

.kline text,
.ind-chart text,
.xaxis text {
  font-family: Roboto, "Noto Sans CJK SC", sans-serif;
}

.watermark {
  font-size: 101px;
  font-weight: 700;
  fill: #f7f7f7;
}

.y-label {
  font-size: 37px;
  fill: #888;
}

.y-label.small {
  font-size: 36px;
}

.turn-num {
  font-size: 32px;
  fill: #e8601e;
  text-anchor: middle;
}

.nine {
  font-size: 34px;
  fill: #fff;
  text-anchor: middle;
}

.k-note {
  fill: #222;
}

.k-note.big {
  font-size: 41px;
}

.k-note.low {
  font-size: 43px;
}

.ind-row {
  display: flex;
  align-items: center;
  height: 64px;
  white-space: nowrap;
}

.ind-tab {
  display: flex;
  align-items: center;
  width: 150px;
  height: 46px;
  margin-left: 4px;
  padding-left: 6px;
  border: 1px solid #e4e4e8;
  border-radius: 6px;
  box-sizing: border-box;
  background: #f6f7f9;
  font-size: 36px;
  color: #333;
  flex-shrink: 0;
}

.caret-ind {
  margin-left: 14px;
  border-width: 12px 7px 0;
}

.ind-val {
  margin-left: 8px;
  font-size: 38px;
  color: #333;
}

.collapse-tab {
  display: flex;
  align-items: center;
  justify-content: center;
  width: 44px;
  height: 60px;
  margin-left: auto;
  border-radius: 8px 0 0 8px;
  background: #999;
}

.vol-legend {
  display: flex;
  gap: 6px;
  margin-left: 5px;
  font-size: 24px;
  transform: scaleX(0.51);
  transform-origin: left center;
}

.turn-legend {
  display: flex;
  gap: 12px;
  margin-left: 3px;
  font-size: 36px;
  transform: scaleX(0.71);
  transform-origin: left center;
}

.dark { color: #333; }
.orange { color: #f29a1f; }
.purple { color: #cc2fcf; }
.green { color: #1f8f1f; }
.grey { color: #888; }

.xaxis {
  margin-top: 3px;
  background: #f8f8fa;
}

.x-label {
  font-size: 37px;
  fill: #666;
}

.right-col {
  width: 339px;
  margin-left: 18px;
}

.chips {
  display: block;
}

.chip-legend {
  display: flex;
  align-items: center;
  height: 32px;
  margin-top: 32px;
  font-size: 29px;
  color: #666;
}

.sq {
  width: 15px;
  height: 15px;
  margin-right: 10px;
}

.sq-green { background: #5cb946; }

.sq-red {
  margin-left: 45px;
  background: #e94548;
}

.chip-row {
  display: flex;
  align-items: center;
  justify-content: space-between;
  height: 44px;
  font-size: 29px;
  color: #666;
}

.chip-row.first {
  margin-top: 12px;
}

.chip-row.after-seg {
  margin-top: 8px;
}

.chip-row b {
  font-size: 30.5px;
  font-weight: 500;
  color: #333;
}

.with-info {
  display: flex;
  align-items: center;
}

.info {
  display: flex;
  align-items: center;
  justify-content: center;
  width: 30px;
  height: 30px;
  margin-left: 14px;
  border-radius: 50%;
  background: #ccc;
  color: #fff;
  font-size: 22px;
  font-style: normal;
  font-weight: 700;
}

.chip-seg {
  display: flex;
  align-items: center;
  height: 72px;
  margin-top: 7px;
  padding: 0 6px;
  border-radius: 6px;
  box-sizing: border-box;
  background: #f6f7f9;
  font-size: 33px;
  color: #777;
}

.seg-item {
  display: flex;
  align-items: center;
  justify-content: center;
  width: 163px;
  height: 60px;
  border-radius: 6px;
}

.seg-item.active {
  background: #fff;
  color: #333;
  font-weight: 700;
  margin-right: 2px;
}

.ai-strip {
  height: 96px;
  padding: 31px 38px 0;
  overflow: hidden;
  box-sizing: border-box;
  background: #fef5f1;
}

.ai-card {
  display: flex;
  align-items: center;
  height: 112px;
  padding: 0 20px 0 22px;
  border: 2px solid #f8cabd;
  border-radius: 24px;
  background: #fff;
}

.ai-logo {
  width: 127px;
  font-family: "Liberation Sans", sans-serif;
  font-size: 52px;
  font-style: italic;
  font-weight: 700;
  color: #f4560f;
}

.ai-text {
  font-size: 41.5px;
  color: #999;
  white-space: nowrap;
}

.ai-go {
  display: flex;
  align-items: center;
  justify-content: center;
  width: 82px;
  height: 82px;
  margin-left: auto;
  margin-top: -6px;
  border-radius: 50%;
  background: linear-gradient(135deg, #ff8a3d, #ff5500);
}

.bottom-bar {
  display: flex;
  height: 136px;
  border-top: 2px solid #ddd;
  box-sizing: border-box;
  background: #f6f7f9;
}

.index-cell {
  width: 275px;
  padding-left: 41px;
  box-sizing: border-box;
}

.caret-up {
  display: block;
  width: 0;
  height: 0;
  margin: 8px 0 0 87px;
  border-style: solid;
  border-width: 0 10px 8px;
  border-color: transparent transparent #777;
}

.index-value {
  width: 195px;
  margin-top: 13px;
  font-size: 38.5px;
  line-height: 44px;
  color: #e02b2b;
  text-align: center;
}

.index-row {
  display: flex;
  justify-content: space-between;
  width: 222px;
  margin-top: 5px;
  font-size: 34px;
  line-height: 46px;
  color: #666;
}

.index-row .up {
  font-size: 36px;
  color: #e02b2b;
}

.bar-cell {
  display: flex;
  flex-direction: column;
  align-items: center;
  width: 201px;
  padding-top: 5px;
  box-sizing: border-box;
  font-size: 35px;
  line-height: 40px;
  color: #666;
}

.bar-cell span {
  margin-top: 20px;
}

.bar-cell.accent {
  color: #e0601a;
}

.nav-bar {
  display: flex;
  align-items: center;
  gap: 181px;
  height: 118px;
  padding-left: 288px;
  box-sizing: border-box;
  background: #fafafa;
}
</style>

<style>
body {
  margin: 0;
  background: #fff;
}
</style>
